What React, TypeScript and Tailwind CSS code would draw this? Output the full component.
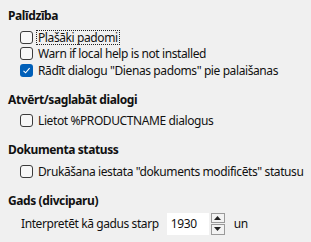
import { useState } from "react";

function Check({ label, checked, focused }: { label: string; checked?: boolean; focused?: boolean }) {
  return (
    <div className="flex h-[16.5px] items-center whitespace-nowrap pl-[20px]">
      {checked ? (
        <span className="flex h-[13px] w-[13px] shrink-0 items-center justify-center rounded-[3px] bg-[#005fb8]">
          <svg width="9" height="9" viewBox="0 0 9 9">
            <path d="M1.5 4.8 L3.6 6.8 L7.6 2.2" fill="none" stroke="#fff" strokeWidth="1.1" />
          </svg>
        </span>
      ) : (
        <span className="h-[13px] w-[13px] shrink-0 rounded-[3px] border border-[#3b3b3b] bg-[#f7f7f7]" />
      )}
      <span
        className={
          "ml-[3px] px-px leading-[13px] " +
          (focused ? "border border-dotted border-[#222]" : "border border-transparent")
        }
      >
        {label}
      </span>
    </div>
  );
}

function Heading({ children }: { children: string }) {
  return <div className="flex h-[18px] items-center whitespace-nowrap pl-2 font-bold">{children}</div>;
}

export default function App() {
  const [year] = useState("1930");
  return (
    <div
      className="h-[242px] w-[311px] overflow-hidden bg-[#f0f0f0] pt-[7px] text-[12px] tracking-[-0.4px] text-[#111]"
      style={{ fontFamily: '"Noto Sans", "Open Sans", sans-serif' }}
    >
      <Heading>Palīdzība</Heading>
      <div className="mt-1">
        <Check label="Plašāki padomi" focused />
        <Check label="Warn if local help is not installed" />
        <Check label='Rādīt dialogu "Dienas padoms" pie palaišanas' checked />
      </div>

      <div className="mt-3">
        <Heading>Atvērt/saglabāt dialogi</Heading>
        <div className="mt-1">
          <Check label="Lietot %PRODUCTNAME dialogus" />
        </div>
      </div>

      <div className="mt-3">
        <Heading>Dokumenta statuss</Heading>
        <div className="mt-1">
          <Check label='Drukāšana iestata "dokuments modificēts" statusu' />
        </div>
      </div>

      <div className="mt-3">
        <Heading>Gads (divciparu)</Heading>
        <div className="mt-[3px] flex h-[22px] items-center whitespace-nowrap pl-[21px]">
          <span>Interpretēt kā gadus starp</span>
          <div className="ml-2 flex h-[22px] items-center">
            <div className="flex h-[22px] w-[42px] items-center bg-white pl-1">{year}</div>
            <div className="ml-[2px] flex h-[22px] w-[14px] flex-col gap-px">
              <div className="flex flex-1 items-center justify-center border border-[#9a9a9a] bg-[#f3f3f3]">
                <svg width="7" height="4" viewBox="0 0 7 4">
                  <path d="M0 4 L3.5 0 L7 4 Z" fill="#222" />
                </svg>
              </div>
              <div className="flex flex-1 items-center justify-center border border-[#9a9a9a] bg-[#f3f3f3]">
                <svg width="7" height="4" viewBox="0 0 7 4">
                  <path d="M0 0 L7 0 L3.5 4 Z" fill="#222" />
                </svg>
              </div>
            </div>
          </div>
          <span className="ml-[9px]">un</span>
        </div>
      </div>
    </div>
  );
}
